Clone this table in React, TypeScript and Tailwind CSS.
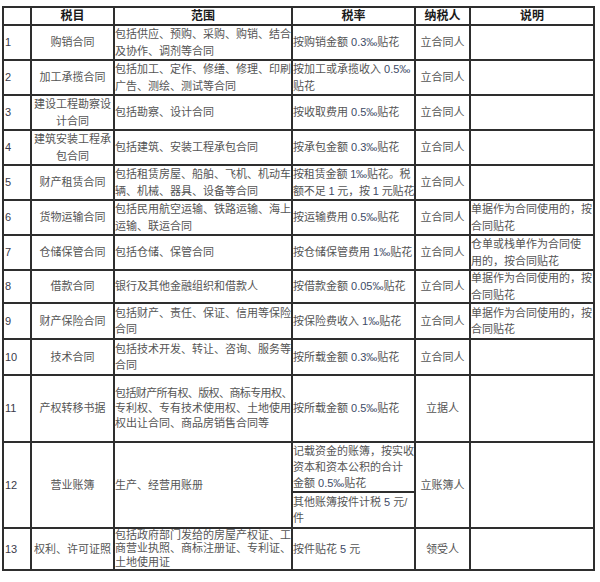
import React from "react";

type Row = {
  n: string;
  name: string;
  scope: string[];
  rate: string[];
  payer: string;
  note?: string[];
};

const rows: Row[] = [
  { n: "1", name: "购销合同", scope: ["包括供应、预购、采购、购销、结合", "及协作、调剂等合同"], rate: ["按购销金额 0.3‰贴花"], payer: "立合同人" },
  { n: "2", name: "加工承揽合同", scope: ["包括加工、定作、修缮、修理、印刷", "广告、测绘、测试等合同"], rate: ["按加工或承揽收入 0.5‰", "贴花"], payer: "立合同人" },
  { n: "3", name: "建设工程勘察设计合同", scope: ["包括勘察、设计合同"], rate: ["按收取费用 0.5‰贴花"], payer: "立合同人" },
  { n: "4", name: "建筑安装工程承包合同", scope: ["包括建筑、安装工程承包合同"], rate: ["按承包金额 0.3‰贴花"], payer: "立合同人" },
  { n: "5", name: "财产租赁合同", scope: ["包括租赁房屋、船舶、飞机、机动车", "辆、机械、器具、设备等合同"], rate: ["按租赁金额 1‰贴花。税", "额不足 1 元，按 1 元贴花"], payer: "立合同人" },
  { n: "6", name: "货物运输合同", scope: ["包括民用航空运输、铁路运输、海上", "运输、联运合同"], rate: ["按运输费用 0.5‰贴花"], payer: "立合同人", note: ["单据作为合同使用的，按", "合同贴花"] },
  { n: "7", name: "仓储保管合同", scope: ["包括仓储、保管合同"], rate: ["按仓储保管费用 1‰贴花"], payer: "立合同人", note: ["仓单或栈单作为合同使", "用的，按合同贴花"] },
  { n: "8", name: "借款合同", scope: ["银行及其他金融组织和借款人"], rate: ["按借款金额 0.05‰贴花"], payer: "立合同人", note: ["单据作为合同使用的，按", "合同贴花"] },
  { n: "9", name: "财产保险合同", scope: ["包括财产、责任、保证、信用等保险", "合同"], rate: ["按保险费收入 1‰贴花"], payer: "立合同人", note: ["单据作为合同使用的，按", "合同贴花"] },
  { n: "10", name: "技术合同", scope: ["包括技术开发、转让、咨询、服务等", "合同"], rate: ["按所载金额 0.3‰贴花"], payer: "立合同人" },
  { n: "11", name: "产权转移书据", scope: ["包括财产所有权、版权、商标专用权、", "专利权、专有技术使用权、土地使用", "权出让合同、商品房销售合同等"], rate: ["按所载金额 0.5‰贴花"], payer: "立据人" },
];

// digits and ‰ get a slightly bluer tone, like the source page
function fmt(line: string) {
  return line.split(/([0-9.]+‰?)/).map((part, i) =>
    /[0-9]/.test(part) ? (
      <span key={i} className="text-[#3d4a66]">
        {part}
      </span>
    ) : (
      <React.Fragment key={i}>{part}</React.Fragment>
    )
  );
}

function Lines({ lines, tightFirst }: { lines: string[]; tightFirst?: boolean }) {
  return (
    <div className="whitespace-nowrap overflow-hidden w-full">
      {lines.map((l, i) => (
        <div key={i} className={tightFirst && i === 0 ? "tracking-[-0.6px]" : ""}>
          {fmt(l)}
        </div>
      ))}
    </div>
  );
}

const cell = "bg-white flex items-center overflow-hidden";

export default function App() {
  return (
    <div className="bg-white w-[600px] h-[582px] pt-[6px] pl-[2px] font-['Liberation_Sans','Noto_Sans_CJK_SC',sans-serif] text-[11px] leading-[16.5px] text-[#555]">
      <div className="grid w-fit gap-[2px] bg-[#2e2e2e] p-[2px] grid-cols-[26px_81px_176px_121px_53px_122px] grid-rows-[16px_33px_33px_33px_33px_33px_33px_33px_31px_34px_34px_65px_48px_34px_40px]">
        {/* header */}
        <div className={cell} />
        {["税目", "范围", "税率", "纳税人", "说明"].map((h) => (
          <div key={h} className={`${cell} justify-center font-bold text-[12px] text-[#1a1a1a]`}>
            {h}
          </div>
        ))}

        {rows.map((r) => (
          <React.Fragment key={r.n}>
            <div className={`${cell} pl-[1px] text-[#3a3a4a]`}>{r.n}</div>
            <div className={`${cell} justify-center text-center px-[1px]`}>{r.name}</div>
            <div className={`${cell} ${r.n === "11" ? "leading-[15px]" : ""}`}>
              <Lines lines={r.scope} tightFirst={r.n === "11"} />
            </div>
            <div className={`${cell} ${r.n === "5" ? "tracking-[-0.15px]" : ""}`}>
              <Lines lines={r.rate} />
            </div>
            <div className={`${cell} justify-center`}>{r.payer}</div>
            <div className={cell}>{r.note && <Lines lines={r.note} />}</div>
          </React.Fragment>
        ))}

        {/* 12: 营业账簿, rate split in two */}
        <div className={`${cell} row-span-2 pl-[1px] text-[#3a3a4a]`}>12</div>
        <div className={`${cell} row-span-2 justify-center`}>营业账簿</div>
        <div className={`${cell} row-span-2`}>生产、经营用账册</div>
        <div className={`${cell} leading-[16px]`}>
          <Lines lines={["记载资金的账簿，按实收", "资本和资本公积的合计", "金额 0.5‰贴花"]} />
        </div>
        <div className={`${cell} row-span-2 justify-center`}>立账簿人</div>
        <div className={`${cell} row-span-2`} />
        <div className={`${cell} col-start-4`}>
          <Lines lines={["其他账簿按件计税 5 元/", "件"]} />
        </div>

        {/* 13 */}
        <div className={`${cell} pl-[1px] text-[#3a3a4a]`}>13</div>
        <div className={`${cell} justify-center`}>权利、许可证照</div>
        <div className={`${cell} leading-[13.5px]`}>
          <Lines lines={["包括政府部门发给的房屋产权证、工", "商营业执照、商标注册证、专利证、", "土地使用证"]} />
        </div>
        <div className={cell}>
          <Lines lines={["按件贴花 5 元"]} />
        </div>
        <div className={`${cell} justify-center`}>领受人</div>
        <div className={cell} />
      </div>
    </div>
  );
}
